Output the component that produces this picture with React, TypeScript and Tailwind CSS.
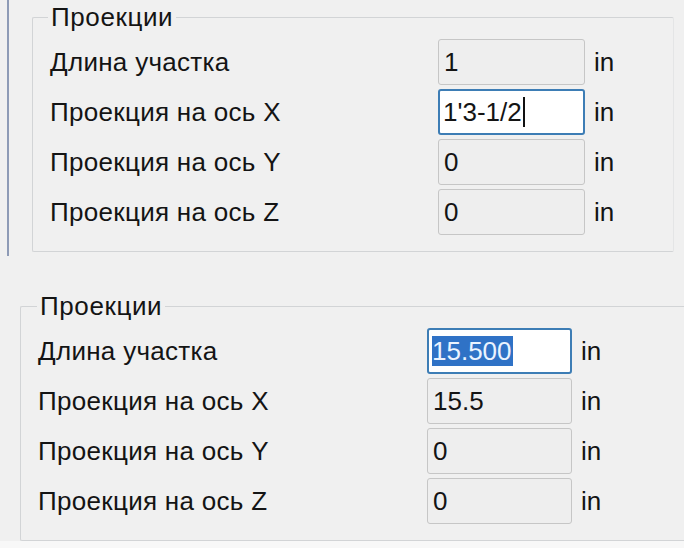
import React from 'react';

interface FieldProps {
  label: string;
  value: string;
  labelWidth: string;
  inputWidth: string;
  focused?: boolean;
  selected?: boolean;
  caret?: boolean;
}

const Field: React.FC<FieldProps> = ({ label, value, labelWidth, inputWidth, focused, selected, caret }) => (
  <div className="flex items-center h-[50px]">
    <div className={`${labelWidth} text-[#141414] tracking-[0.3px]`}>{label}</div>
    <div
      className={`
        ${inputWidth} h-[46px] flex items-center rounded-[3px]
        ${focused
          ? 'border-2 border-[#3d7db5] bg-white pl-[3px]'
          : 'border border-[#c6c6c6] bg-[#eeeeee] pl-[5px]'
        }
      `}
    >
      {selected ? (
        <span className="bg-[#2f72c6] text-[#eaf3ff] leading-[30px] pr-[1px]">{value}</span>
      ) : (
        <span className="text-[#141414]">{value}</span>
      )}
      {caret && <span className="w-[2px] h-[30px] bg-[#111] ml-[1px]" />}
    </div>
    <div className="ml-[9px] text-[#141414]">in</div>
  </div>
);

interface GroupProps {
  rows: { label: string; value: string; focused?: boolean; selected?: boolean; caret?: boolean }[];
  width: string;
  labelWidth: string;
  inputWidth: string;
  legendLeft: string;
}

const Group: React.FC<GroupProps> = ({ rows, width, labelWidth, inputWidth, legendLeft }) => (
  <div className={`relative ${width} h-[235px] border border-[#d2d4d6] border-r-[#e4e5e6] rounded-[2px] pt-[19px] pl-[17px]`}>
    <span className={`absolute ${legendLeft} -top-[14px] px-[3px] bg-[#f0f0f0] leading-none text-[#141414] tracking-[0.6px]`}>
      Проекции
    </span>
    {rows.map(r => (
      <Field key={r.label} {...r} labelWidth={labelWidth} inputWidth={inputWidth} />
    ))}
  </div>
);

export default function App() {
  return (
    <div
      className="w-[684px] h-[548px] overflow-hidden bg-[#f0f0f0] flex flex-col text-[26px] leading-[30px]"
      style={{ fontFamily: '"Liberation Sans", Arial, sans-serif' }}
    >
      {/* Top panel */}
      <div className="h-[256px] ml-[7px] border-l-2 border-[#8e9bb6] pt-[17px] pl-[23px]">
        <Group
          width="w-[642px]"
          labelWidth="w-[388px]"
          inputWidth="w-[147px]"
          legendLeft="left-[15px]"
          rows={[
            { label: 'Длина участка', value: '1' },
            { label: 'Проекция на ось X', value: "1'3-1/2", focused: true, caret: true },
            { label: 'Проекция на ось Y', value: '0' },
            { label: 'Проекция на ось Z', value: '0' },
          ]}
        />
      </div>

      {/* Bottom panel */}
      <div className="pt-[50px] pl-[20px]">
        <Group
          width="w-[672px]"
          labelWidth="w-[389px]"
          inputWidth="w-[145px]"
          legendLeft="left-[16px]"
          rows={[
            { label: 'Длина участка', value: '15.500', focused: true, selected: true },
            { label: 'Проекция на ось X', value: '15.5' },
            { label: 'Проекция на ось Y', value: '0' },
            { label: 'Проекция на ось Z', value: '0' },
          ]}
        />
      </div>
      <div className="flex-1 bg-[#f8f8f8]" />
    </div>
  );
}
